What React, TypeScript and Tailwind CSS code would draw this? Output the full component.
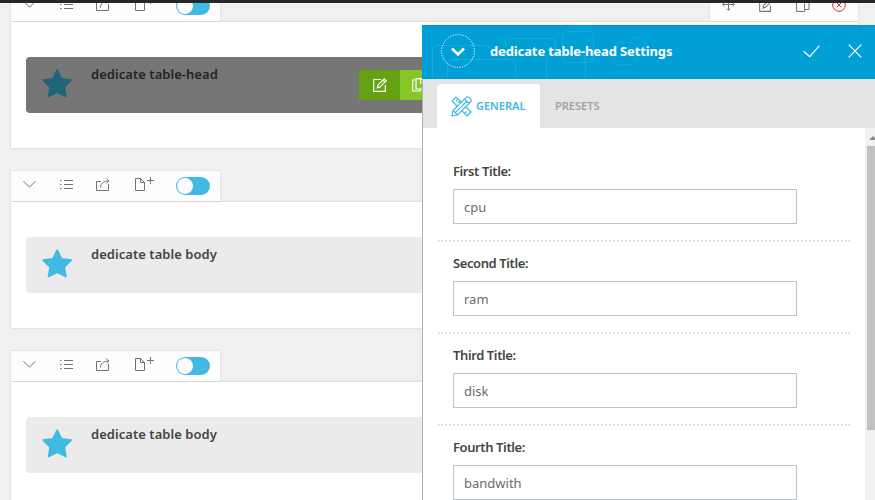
import React from "react";

const Star = ({ color }: { color: string }) => (
  <svg width="31" height="29" viewBox="0 0 31 29" className="ml-4 mt-3 shrink-0">
    <path
      d="M15.2 1.2 19.5 9.7 29.2 11.1 22.3 18.1 23.9 27.6 15.2 23.3 6.5 27.6 8.1 18.1 1.2 11.1 10.9 9.7Z"
      fill={color}
      stroke={color}
      strokeWidth="1.6"
      strokeLinejoin="round"
    />
  </svg>
);

const Pencil = ({ size }: { size: number }) => (
  <svg width={size} height={size} viewBox="0 0 14 14" fill="none" stroke="currentColor" strokeWidth="1.15">
    <path d="M8 1.5H.7v11.8h11.6V7M4.3 9.8l.8-3L11.2.8l2 2-6.1 6.1-2.8.9zM9.8 2.2l2 2" />
  </svg>
);

const LeftTools = () => (
  <div className="flex h-[30px] w-[209px] items-center bg-[#fdfdfd] pl-3 text-[#75706f] shadow-[0_0_2px_rgba(0,0,0,0.13)]">
    <svg width="13" height="9" viewBox="0 0 13 9" fill="none" stroke="currentColor" className="-mt-1">
      <path d="M.5 1.2l6 6 6-6" />
    </svg>
    <svg width="14" height="12" viewBox="0 0 14 12" fill="none" stroke="currentColor" className="-mt-[3px] ml-6">
      <path d="M4 1.5h9M4 5.5h9M4 9.5h9M0 1.5h1.5M0 5.5h1.5M0 9.5h1.5" />
    </svg>
    <svg width="14" height="14" viewBox="0 0 14 14" fill="none" stroke="currentColor" className="-mt-[3px] ml-[22px]">
      <path d="M5 3.5H.5v9h12V6M4.5 9.5c0-4 3-6.5 8-6.5M10.3.5 12.8 3l-2.5 2.5" />
    </svg>
    <svg width="20" height="16" viewBox="0 0 20 16" fill="none" stroke="currentColor" className="-mt-1 ml-[25px]">
      <path d="M.5 2.5h5l4 4v8h-9zM5.5 2.5v4h4M15.5 1v7M12 4.5h7" />
    </svg>
    <div className="-mt-px ml-[21px] flex h-[18px] w-[34px] items-center rounded-full bg-[#42b9e2] pl-px">
      <div className="size-4 rounded-full bg-[#fbfbfb]" />
    </div>
  </div>
);

const RightTools = () => (
  <div className="flex h-[30px] w-[148px] items-center bg-[#fdfdfd] pl-3 text-[#77777c] shadow-[0_0_2px_rgba(0,0,0,0.13)]">
    <svg width="13" height="13" viewBox="0 0 13 13" fill="none" stroke="currentColor" className="-mt-[3px]">
      <path d="M6.5.8v11.4M.8 6.5h11.4M4.8 2.4 6.5.7l1.7 1.7M4.8 10.6l1.7 1.7 1.7-1.7M2.4 4.8.7 6.5l1.7 1.7M10.6 4.8l1.7 1.7-1.7 1.7" />
    </svg>
    <div className="-mt-0.5 ml-6"><Pencil size={13} /></div>
    <svg width="14" height="14" viewBox="0 0 14 14" fill="none" stroke="currentColor" className="-mt-0.5 ml-6">
      <path d="M.5 2.5h5l3 3v8h-8zM6 .5h4l3 3v8H9" />
    </svg>
    <svg width="14" height="14" viewBox="0 0 14 14" fill="none" stroke="#c5373b" className="-mt-[3px] ml-[22px]">
      <circle cx="7" cy="7" r="6.3" />
      <path d="m4.8 4.8 4.4 4.4m0-4.4L4.8 9.2" />
    </svg>
  </div>
);

const Section = ({ title, active = false }: { title: string; active?: boolean }) => (
  <section className="mb-[23px] h-[157px] shrink-0">
    <div className="flex justify-between">
      <LeftTools />
      <RightTools />
    </div>
    <div className="mt-px h-[126px] bg-white px-[15px] pt-[35px] shadow-[0_0_2px_rgba(0,0,0,0.2)]">
      <div className={`flex h-14 rounded-sm ${active ? "bg-[#767676]" : "bg-[#ebebeb]"}`}>
        <Star color={active ? "#20657c" : "#42b9e2"} />
        <span
          className={`ml-[18px] mt-2 w-[269px] text-[13px] leading-[18px] font-semibold tracking-[0.04px] ${
            active ? "text-[#242424]" : "text-[#444444]"
          }`}
        >
          {title}
        </span>
        {active && (
          <div className="ml-[-1px] mt-[13px] flex h-[30px] text-white">
            <div className="flex w-[41px] items-center justify-center bg-[#66a113]"><Pencil size={14} /></div>
            <div className="flex w-[41px] items-center bg-[#84c727] pl-3">
              <svg width="14" height="14" viewBox="0 0 14 14" fill="none" stroke="currentColor" strokeWidth="1.2">
                <path d="M3 2H.7v11H8v-2M4 .7h5l3.5 3.5V11H4zM8.5 1v4h4" />
              </svg>
            </div>
          </div>
        )}
      </div>
    </div>
  </section>
);

const fields = [
  ["First Title:", "cpu"],
  ["Second Title:", "ram"],
  ["Third Title:", "disk"],
  ["Fourth Title:", "bandwith"],
];

const Tools = () => (
  <svg width="21" height="21" viewBox="0 0 21 21" fill="none" stroke="#43b8dc" strokeWidth="1.2">
    <path d="M6.5 10.5 1 5l4-4 5.5 5.5M14.5 10.5 20 16l-4 4-5.5-5.5M5 5l1.5-1.5M7 7l1.5-1.5M14 17l1.5-1.5M16.5 19l1.5-1.5" />
    <path d="m2 14.5-1 5.5 5.5-1L20 5.5V3.2L17.8 1h-2.3zM2 14.5 6.5 19M13.5 3 18 7.5M4.3 16.7 15.7 5.3" />
  </svg>
);

const Panel = () => (
  <aside className="absolute left-[422px] top-[25px] flex h-[475px] w-[453px] flex-col border-l border-[#a9b2bd] bg-white">
    <header className="relative -ml-px flex h-[54px] shrink-0 items-center border-y border-[#0794c4] bg-[#00a0d6] pl-[19px] text-white">
      <svg className="absolute left-0 top-0" width="250" height="52" fill="none" stroke="#fff" strokeOpacity=".1">
        <path d="M10.5 52V24.5q0-5 5-5h48q5 0 5 5v9M25.5 52V38.5q0-5 5-5h58q5 0 5 5V52M83.5 33V17.5q0-5 5-5h40q5 0 5 5v11" />
        <rect x="140.5" y="5.5" width="31" height="31" rx="5" />
        <path d="M124.5 52V33.5q0-5 5-5h29q5 0 5 5V52" />
        <rect x="192.5" y="16.5" width="22" height="22" rx="5" strokeOpacity=".06" />
        <rect x="208.5" y="11.5" width="15" height="15" rx="5" strokeOpacity=".06" />
      </svg>
      <svg width="34" height="34" viewBox="0 0 34 34" fill="none" stroke="#fff" className="-mt-[3px]">
        <circle cx="17" cy="17" r="16.4" strokeDasharray="1.2 1.35" />
        <path d="m11 14.5 6 6 6-6" strokeWidth="2.6" />
      </svg>
      <h1 className="relative ml-[15px] w-[183px] whitespace-nowrap text-[13px] font-bold tracking-[-0.12px]">
        dedicate table-head Settings
      </h1>
      <svg width="17" height="13" viewBox="0 0 17 13" fill="none" stroke="#fff" strokeWidth="1.2" className="-mt-0.5 ml-[130px]">
        <path d="m.7 6.2 6 5.5L16.3.8" />
      </svg>
      <svg width="14" height="14" viewBox="0 0 14 14" fill="none" stroke="#fff" strokeWidth="1.2" className="-mt-0.5 ml-7">
        <path d="m.7.7 12.6 12.6m0-12.6L.7 13.3" />
      </svg>
    </header>
    <nav className="flex h-[49px] shrink-0 items-end bg-[#e4e4e4] pl-3.5 text-[11px] font-semibold">
      <div className="flex h-11 w-[103px] items-center rounded-t-sm bg-white pl-3.5 text-[#43b8dc]">
        <Tools />
        <span className="ml-1">GENERAL</span>
      </div>
      <span className="flex h-11 items-center pl-[15px] text-[#a3a3a3]">PRESETS</span>
    </nav>
    <div className="flex min-h-0 flex-1">
      <div className="min-w-0 flex-1 overflow-hidden pl-[15px] pr-[15px] pt-5">
        {fields.map(([label, value]) => (
          <div key={label} className="h-[92px] pl-[15px] pt-[14px]">
            <div className="h-[27px] text-[13px] leading-[18px] font-semibold tracking-[-0.4px] text-[#454545]">{label}</div>
            <div className="flex h-[35px] w-[344px] items-center border border-[#bac5cd] pl-2.5 pt-0.5 text-[13px] text-[#6b6b6b]">
              {value}
            </div>
            <div className="-ml-[15px] mt-4 border-b-2 border-dotted border-[#dfdfdf]" />
          </div>
        ))}
      </div>
      <div className="flex w-2.5 flex-col items-end overflow-hidden bg-[#f1f1f1]">
        <svg width="6" height="18" viewBox="0 0 6 18" className="shrink-0">
          <path d="m0 12 4-4 2 2v2z" fill="#8a8a8a" />
        </svg>
        <div className="h-[284px] w-2 shrink-0 bg-[#c1c1c1]" />
      </div>
    </div>
  </aside>
);

export default function App() {
  return (
    <main className="relative h-[500px] w-[875px] overflow-hidden bg-[#f0f0f0] font-['Noto_Sans','Open_Sans',sans-serif]">
      <div className="-mt-[9px] ml-[11px] flex w-[847px] flex-col">
        <Section title="dedicate table-head" active />
        <Section title="dedicate table body" />
        <Section title="dedicate table body" />
      </div>
      <div className="absolute inset-x-0 top-0 h-[3px] bg-[#262729]" />
      <Panel />
    </main>
  );
}
